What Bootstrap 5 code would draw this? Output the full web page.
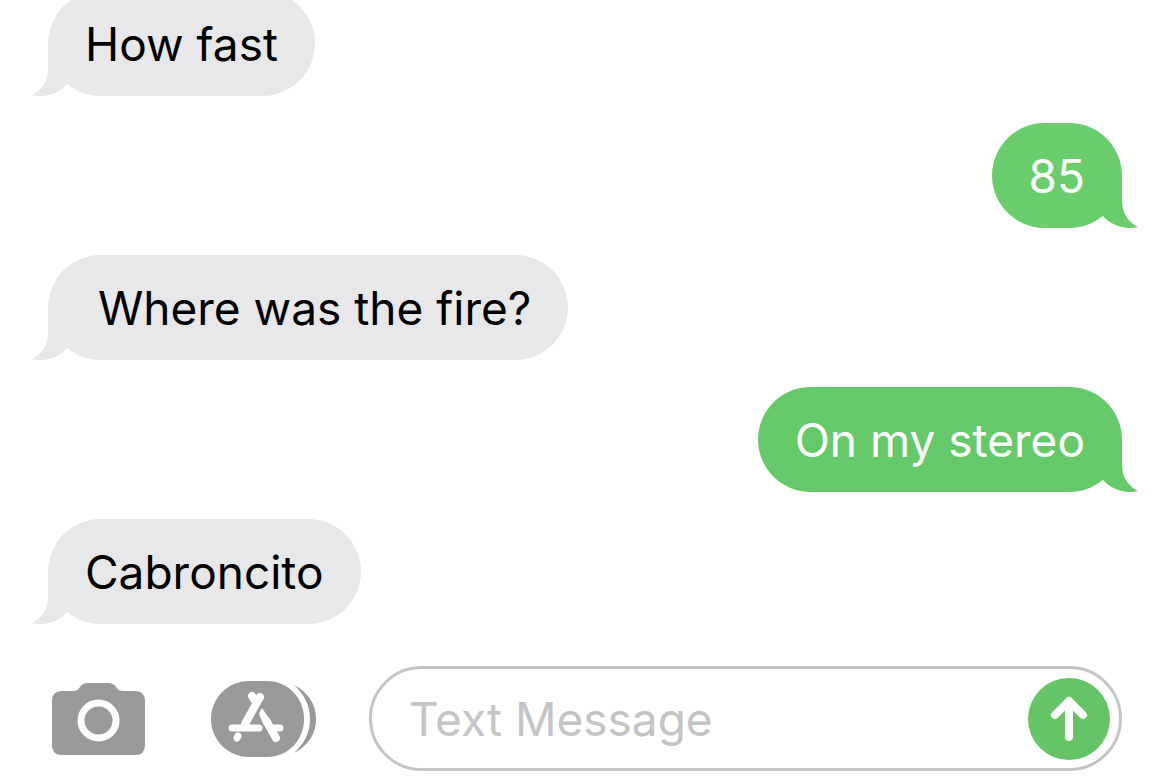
<!DOCTYPE html>
<html lang="en">
<head>
<meta charset="utf-8">
<meta name="viewport" content="width=device-width, initial-scale=1">
<title>Messages</title>
<link href="https://cdn.jsdelivr.net/npm/bootstrap@5.3.0/dist/css/bootstrap.min.css" rel="stylesheet">
<style>
  body { font-family: Inter, "Liberation Sans", sans-serif; font-size: 46px; line-height: 57px; color: #000; background: #fff; }
  .thread { gap: 27px; padding: 0 48px 42px; min-height: 0; }
  .bubble { border-radius: 53px; padding: 25px 37px 23px; max-width: 80%; background: var(--fill); }
  .tail { position: absolute; bottom: 0; width: 40px; height: 60px; fill: var(--fill); }
  .received { --fill: #e8e8ea; }
  .received .tail { left: -16px; }
  .sent { --fill: #66c969; color: #fff; }
  .sent-early { --fill: #69cd6c; }
  .sent .tail { right: -16px; }
  .composer { padding: 0 48px 11px 52px; }
  .tool { color: #999; line-height: 0; }
  .tool-camera { margin-right: 66px; }
  .tool-apps { margin-right: 53px; }
  .field { border: 3px solid #c4c4c6; padding: 9px 9px 8px 37px; min-width: 0; }
  .field input { color: #000; width: 0; min-width: 0; outline: 0; }
  .field input::placeholder { color: #c4c4c6; opacity: 1; }
  .send { width: 82px; height: 82px; background: #65c466; }
</style>
</head>
<body>
<div class="vh-100 d-flex flex-column overflow-hidden">
  <main class="thread flex-grow-1 d-flex flex-column justify-content-end overflow-hidden">
    <div class="bubble received position-relative flex-shrink-0 align-self-start">How fast
      <svg class="tail" viewBox="0 0 40 60" aria-hidden="true"><path d="M16 8V32C16 45 10 54 0 59C12 62 26 58 35 48L40 30L34 0Z"/></svg></div>
    <div class="bubble sent sent-early position-relative flex-shrink-0 align-self-end">85
      <svg class="tail" viewBox="0 0 40 60" aria-hidden="true"><path d="M24 8V32C24 45 30 54 40 59C28 62 14 58 5 48L0 30L6 0Z"/></svg></div>
    <div class="bubble received position-relative flex-shrink-0 align-self-start">&nbsp;Where was the fire?
      <svg class="tail" viewBox="0 0 40 60" aria-hidden="true"><path d="M16 8V32C16 45 10 54 0 59C12 62 26 58 35 48L40 30L34 0Z"/></svg></div>
    <div class="bubble sent position-relative flex-shrink-0 align-self-end">On my stereo
      <svg class="tail" viewBox="0 0 40 60" aria-hidden="true"><path d="M24 8V32C24 45 30 54 40 59C28 62 14 58 5 48L0 30L6 0Z"/></svg></div>
    <div class="bubble received position-relative flex-shrink-0 align-self-start">Cabroncito
      <svg class="tail" viewBox="0 0 40 60" aria-hidden="true"><path d="M16 8V32C16 45 10 54 0 59C12 62 26 58 35 48L40 30L34 0Z"/></svg></div>
  </main>
  <form class="composer d-flex align-items-center flex-shrink-0">
    <button type="button" class="tool tool-camera btn p-0 border-0 flex-shrink-0" aria-label="Camera">
      <svg width="93" height="72" viewBox="0 0 93 72" aria-hidden="true">
        <path fill="currentColor" d="M10 8H21C24 8 26 7 28 4C30 1 32 0 36 0H56C60 0 62 1 64 4C66 7 68 8 71 8H83Q93 8 93 18V62Q93 72 83 72H10Q0 72 0 62V18Q0 8 10 8Z"/>
        <circle cx="46.500" cy="37.500" r="17.500" fill="none" stroke="#fff" stroke-width="7"/>
      </svg>
    </button>
    <button type="button" class="tool tool-apps btn p-0 border-0 flex-shrink-0" aria-label="Apps">
      <svg width="105" height="76" viewBox="0 0 105 76" aria-hidden="true">
        <path fill="currentColor" d="M38 0H56C77 0 93 17 93 38C93 59 77 76 56 76H38C17 76 0 59 0 38C0 17 17 0 38 0Z"/>
        <path fill="currentColor" d="M83 4C97 11 105 23 105 38C105 53 97 65 83 72C93 63 99 52 99 38C99 24 93 13 83 4Z"/>
        <g fill="none" stroke="#fff" stroke-width="7" stroke-linecap="round" stroke-linejoin="round">
          <path d="M21 47H48M61 47H69M26 57L27 55"/>
          <path stroke-width="8" d="M49 16L34 43M41 15L44 20M56 41L65 57"/>
        </g>
        <path fill="#fff" d="M51 27L60 40L53 44L49 36Q47 32 51 27Z"/>
      </svg>
    </button>
    <div class="field d-flex align-items-center flex-grow-1 rounded-pill">
      <input type="text" class="flex-grow-1 border-0 bg-transparent p-0" placeholder="Text Message" aria-label="Text Message">
      <button type="button" class="send btn rounded-circle border-0 p-0 flex-shrink-0 d-flex align-items-center justify-content-center" aria-label="Send">
        <svg width="38" height="46" viewBox="0 0 38 46" fill="none" stroke="#fff" stroke-width="8" stroke-linecap="round" stroke-linejoin="round" aria-hidden="true"><path d="M19 41V5M5 19L19 5L33 19"/></svg>
      </button>
    </div>
  </form>
</div>
<script src="https://cdn.jsdelivr.net/npm/bootstrap@5.3.0/dist/js/bootstrap.bundle.min.js"></script>
</body>
</html>
